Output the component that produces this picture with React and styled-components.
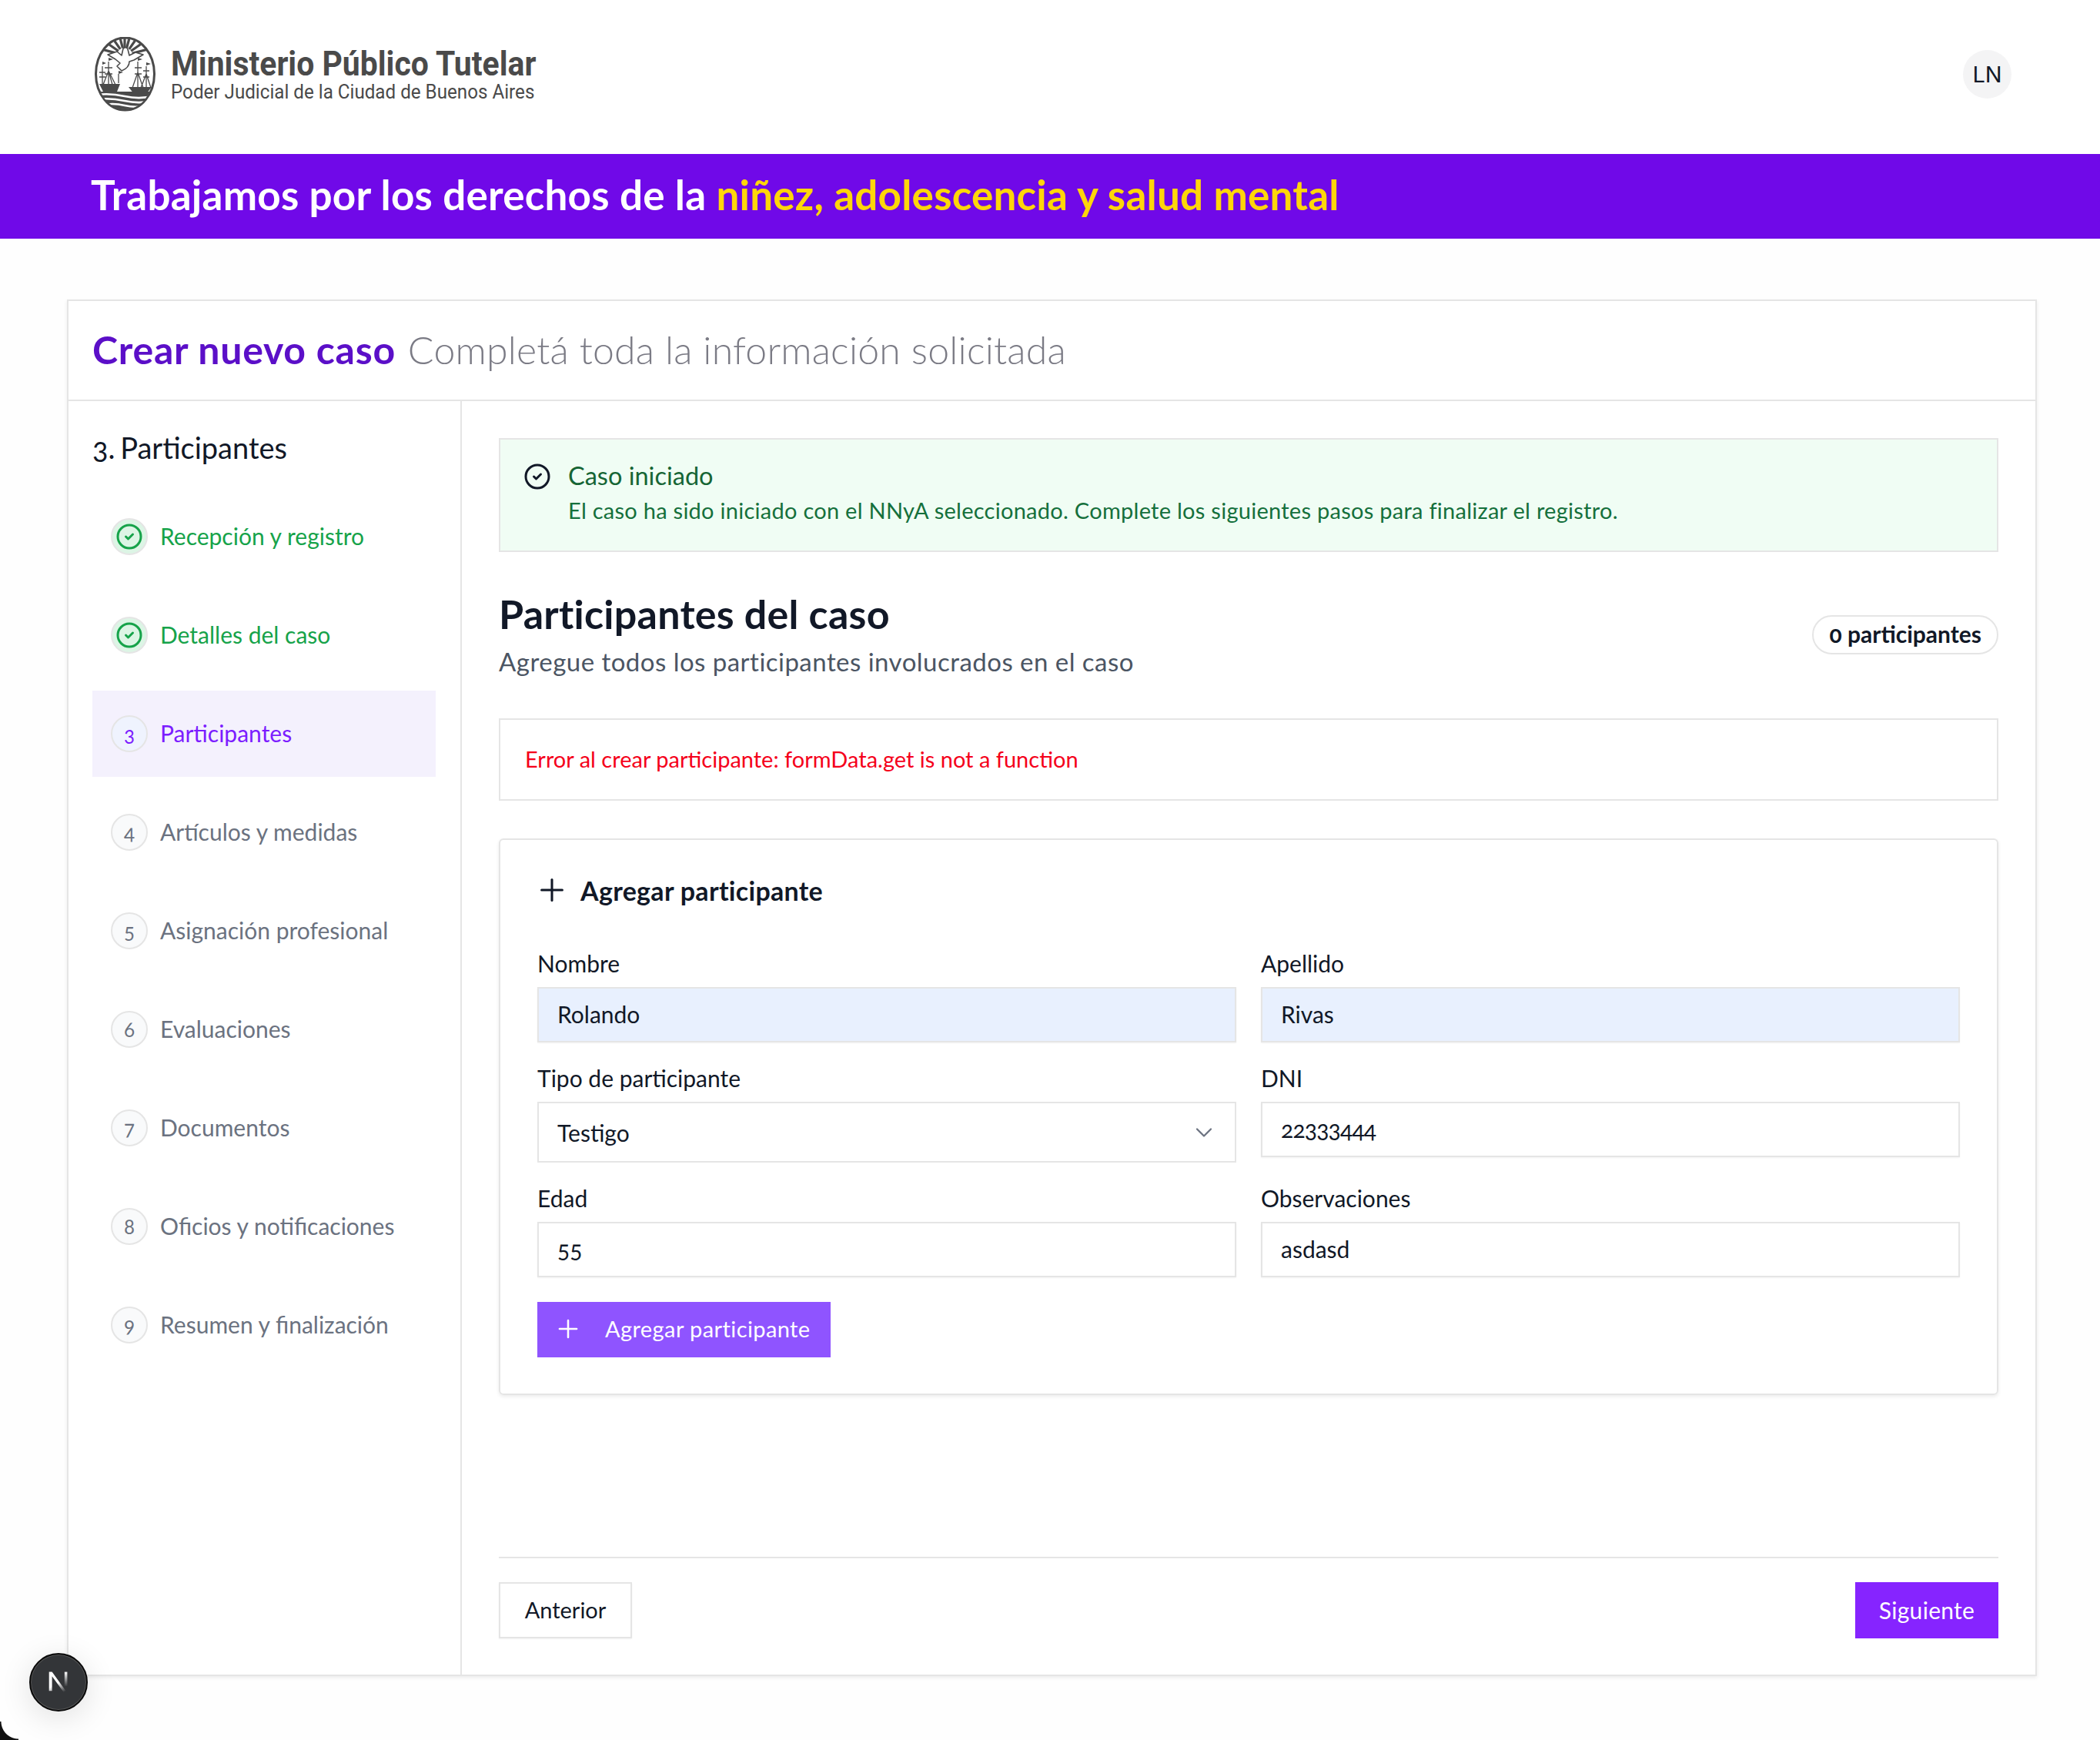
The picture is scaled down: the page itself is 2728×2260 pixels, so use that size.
import React from 'react';
import styled, { createGlobalStyle } from 'styled-components';
import { CircleCheck, ChevronDown, Plus } from 'lucide-react';

const GlobalStyle = createGlobalStyle`
    html, body {
        margin: 0;
        padding: 0;
        background: #fefefe;
    }
    * {
        box-sizing: border-box;
    }
    body {
        font-family: Lato, "Open Sans", sans-serif;
        color: #111827;
        font-variant-numeric: oldstyle-nums;
    }
`;

const steps = [
    { label: 'Recepción y registro', status: 'done' },
    { label: 'Detalles del caso', status: 'done' },
    { label: 'Participantes', status: 'active' },
    { label: 'Artículos y medidas', status: 'pending' },
    { label: 'Asignación profesional', status: 'pending' },
    { label: 'Evaluaciones', status: 'pending' },
    { label: 'Documentos', status: 'pending' },
    { label: 'Oficios y notificaciones', status: 'pending' },
    { label: 'Resumen y finalización', status: 'pending' },
];

const stepColor = { done: '#16a34a', active: '#7c1dff', pending: '#6b7280' };
const circleBg = { done: '#dcf5e5', active: '#eff3fe', pending: '#f9fafb' };

// escudo de la ciudad, dibujado a mano
function Logo() {
    const rays = [-165, -145, -125, -105, -90, -75, -55, -35, -15];
    return (
        <svg width="80" height="98" viewBox="23 18 80 98">
            <defs>
                <clipPath id="oval">
                    <ellipse cx="62.5" cy="66" rx="37" ry="46" />
                </clipPath>
            </defs>
            <ellipse cx="62.5" cy="66" rx="38" ry="47" fill="#fff" stroke="#4a4a4a" strokeWidth="3" />
            <g stroke="#4a4a4a" strokeWidth="3.2" clipPath="url(#oval)">
                {rays.map((a) => {
                    const r = (a * Math.PI) / 180;
                    return (
                        <line
                            key={a}
                            x1={62 + 10 * Math.cos(r)}
                            y1={42 + 10 * Math.sin(r)}
                            x2={62 + 34 * Math.cos(r)}
                            y2={42 + 34 * Math.sin(r)}
                        />
                    );
                })}
            </g>
            <path
                d="M40 41 L52 37 L58 42 L60 33 Q64 30 66 34 L68 42 L76 38 L86 41 L74 48 L68 50 Q68 58 58 62 L52 56 L56 52 L50 47 Z"
                fill="#fff"
                stroke="#4a4a4a"
                strokeWidth="1.6"
                strokeLinejoin="round"
            />
            <g stroke="#4a4a4a" strokeWidth="1.3" fill="none">
                <path d="M33 56 V80 M41 50 V80 M29 64 H37 M29 70 H37 M36 58 H46 M36 66 H46 M34 80 L41 62 L50 80 M41 62 L46 80 M54 66 V78" />
                <path d="M79 50 V84 M90 56 V84 M75 58 H84 M75 66 H84 M86 62 H94 M86 70 H94 M72 84 L79 64 L86 84 M83 84 L90 66 L96 84" />
            </g>
            <path d="M29 79 H56 L52 89 H34 Z M67 83 H97 L90 92 H74 Z" fill="#4a4a4a" />
            <path d="M33 50 l5 2 l-5 2 Z M41 45 l6 2 l-6 2 Z M79 45 l6 2 l-6 2 Z M90 51 l6 2 l-6 2 Z M54 62 l6 2 l-6 2 Z" fill="#4a4a4a" />
            <g clipPath="url(#oval)">
                <rect x="23" y="89" width="80" height="26" fill="#4a4a4a" />
                <path
                    d="M20 94 Q40 90 62 95 T106 93 M20 100 Q40 96 62 101 T106 99 M30 107 Q46 103 62 107 T96 106"
                    stroke="#fff"
                    strokeWidth="2.6"
                    fill="none"
                />
            </g>
        </svg>
    );
}

export default function App() {
    return (
        <Page>
            <GlobalStyle />
            <Header>
                <Brand>
                    <Logo />
                    <BrandText>
                        <BrandName>Ministerio Público Tutelar</BrandName>
                        <BrandSub>Poder Judicial de la Ciudad de Buenos Aires</BrandSub>
                    </BrandText>
                </Brand>
                <Avatar>LN</Avatar>
            </Header>
            <Banner>
                Trabajamos por los derechos de la <Highlight>niñez, adolescencia y salud mental</Highlight>
            </Banner>

            <Card>
                <CardHead>
                    <CardTitle>Crear nuevo caso</CardTitle>
                    <CardHint>Completá toda la información solicitada</CardHint>
                </CardHead>
                <CardBody>
                    <Sidebar>
                        <SideTitle>3. Participantes</SideTitle>
                        <StepList>
                            {steps.map((step, i) => (
                                <Step key={step.label} $status={step.status}>
                                    <StepCircle $status={step.status}>
                                        {step.status === 'done' ? <CircleCheck size={36} strokeWidth={2} /> : i + 1}
                                    </StepCircle>
                                    <StepLabel>{step.label}</StepLabel>
                                </Step>
                            ))}
                        </StepList>
                    </Sidebar>

                    <Main>
                        <Alert>
                            <AlertIcon>
                                <CircleCheck size={36} strokeWidth={2} />
                            </AlertIcon>
                            <div>
                                <AlertTitle>Caso iniciado</AlertTitle>
                                <AlertText>
                                    El caso ha sido iniciado con el NNyA seleccionado. Complete los siguientes pasos para finalizar el registro.
                                </AlertText>
                            </div>
                        </Alert>

                        <SectionHead>
                            <div>
                                <SectionTitle>Participantes del caso</SectionTitle>
                                <SectionText>Agregue todos los participantes involucrados en el caso</SectionText>
                            </div>
                            <Badge>0 participantes</Badge>
                        </SectionHead>

                        <ErrorBox>Error al crear participante: formData.get is not a function</ErrorBox>

                        <FormCard>
                            <FormTitle>
                                <Plus size={46} strokeWidth={1.6} />
                                <span>Agregar participante</span>
                            </FormTitle>
                            <FormGrid>
                                <Field>
                                    <Label>Nombre</Label>
                                    <Input $autofill readOnly value="Rolando" />
                                </Field>
                                <Field>
                                    <Label>Apellido</Label>
                                    <Input $autofill readOnly value="Rivas" />
                                </Field>
                                <Field>
                                    <Label>Tipo de participante</Label>
                                    <SelectBox>
                                        <span>Testigo</span>
                                        <ChevronDown size={36} strokeWidth={1.5} color="#6b7280" />
                                    </SelectBox>
                                </Field>
                                <Field>
                                    <Label>DNI</Label>
                                    <Input $tight readOnly value="22333444" />
                                </Field>
                                <Field>
                                    <Label>Edad</Label>
                                    <Input readOnly value="55" />
                                </Field>
                                <Field>
                                    <Label>Observaciones</Label>
                                    <Input readOnly value="asdasd" />
                                </Field>
                            </FormGrid>
                            <AddButton>
                                <Plus size={38} strokeWidth={1.6} />
                                <span>Agregar participante</span>
                            </AddButton>
                        </FormCard>

                        <Footer>
                            <BackButton>Anterior</BackButton>
                            <NextButton>Siguiente</NextButton>
                        </Footer>
                    </Main>
                </CardBody>
            </Card>

            <DevBadge>
                <svg width="38" height="38" viewBox="0 0 34 34">
                    <defs>
                        <linearGradient id="nfade" x1="0" y1="0" x2="0.5" y2="1">
                            <stop offset="0.55" stopColor="#fff" />
                            <stop offset="1" stopColor="#fff" stopOpacity="0" />
                        </linearGradient>
                        <linearGradient id="nbar" x1="0" y1="0" x2="0" y2="1">
                            <stop offset="0" stopColor="#fff" />
                            <stop offset="1" stopColor="#fff" stopOpacity="0" />
                        </linearGradient>
                    </defs>
                    <path d="M6 5 H9.5 L29 32 H25.5 L9.5 10 V27 H6 Z" fill="url(#nfade)" />
                    <rect x="24" y="5" width="3.2" height="17" fill="url(#nbar)" />
                </svg>
            </DevBadge>
            <Corner />
        </Page>
    );
}

const Page = styled.div`
    position: relative;
    width: 2728px;
    height: 2260px;
    overflow: hidden;
`;
const Header = styled.header`
    height: 200px;
    padding: 0 115px 7px 123px;
    background: #fff;
    display: flex;
    align-items: center;
    justify-content: space-between;
`;
const Brand = styled.div`
    display: flex;
    align-items: center;
    gap: 19px;
    color: #4a4a4a;
`;
const BrandText = styled.div`
    display: flex;
    flex-direction: column;
    align-items: flex-start;
    margin-bottom: 2px;
`;
const BrandName = styled.span`
    font-family: Roboto, sans-serif;
    font-size: 44px;
    line-height: 46px;
    font-weight: 700;
    transform: scaleX(0.93);
    transform-origin: left center;
`;
const BrandSub = styled.span`
    font-family: Roboto, sans-serif;
    font-size: 26px;
    line-height: 26px;
    transform: scaleX(0.93);
    transform-origin: left center;
`;
const Avatar = styled.div`
    width: 63px;
    height: 63px;
    border-radius: 50%;
    background: #f4f4f5;
    display: flex;
    align-items: center;
    justify-content: center;
    font-family: Inter, sans-serif;
    font-size: 29px;
`;
const Banner = styled.div`
    height: 110px;
    padding: 0 0 5px 118px;
    background: #7009e8;
    color: #fff;
    display: flex;
    align-items: center;
    white-space: pre-wrap;
    font-size: 53px;
    font-weight: 700;
    letter-spacing: 0.22px;
`;
const Highlight = styled.span`
    color: #ffd60a;
`;
const Card = styled.section`
    width: 2559px;
    height: 1788px;
    margin: 79px 0 0 87px;
    background: #fff;
    border: 2px solid #e5e5e5;
    box-shadow: 0 2px 5px rgba(0, 0, 0, 0.08);
    display: flex;
    flex-direction: column;
`;
const CardHead = styled.div`
    height: 130px;
    padding: 0 0 2px 31px;
    border-bottom: 2px solid #e5e5e5;
    display: flex;
    align-items: center;
    gap: 16px;
    font-size: 50px;
`;
const CardTitle = styled.span`
    color: #5b0fc8;
    font-weight: 700;
    letter-spacing: 0.75px;
`;
const CardHint = styled.span`
    color: #7b7b85;
    font-weight: 300;
    letter-spacing: 0.2px;
`;
const CardBody = styled.div`
    flex: 1;
    display: flex;
    min-height: 0;
`;
const Sidebar = styled.aside`
    width: 511px;
    flex: none;
    padding: 37px 0 0 31px;
    border-right: 2px solid #e5e5e5;
`;
const SideTitle = styled.div`
    font-size: 38px;
    line-height: 46px;
    margin-bottom: 37px;
    word-spacing: -3px;
`;
const StepList = styled.div`
    display: flex;
    flex-direction: column;
    gap: 16px;
`;
const Step = styled.div`
    width: 446px;
    height: 112px;
    padding-left: 24px;
    display: flex;
    align-items: center;
    gap: 16px;
    color: ${(p) => stepColor[p.$status]};
    background: ${(p) => (p.$status === 'active' ? '#f4f1fd' : 'transparent')};
`;
const StepCircle = styled.div`
    width: 48px;
    height: 48px;
    flex: none;
    border-radius: 50%;
    border: 2px solid #e5e5e5;
    background: ${(p) => circleBg[p.$status]};
    display: flex;
    align-items: center;
    justify-content: center;
    font-size: 26px;
`;
const StepLabel = styled.span`
    font-size: 30px;
    padding-bottom: 3px;
`;
const Main = styled.main`
    flex: 1;
    min-width: 0;
    padding: 48px 48px 47px;
    display: flex;
    flex-direction: column;
`;
const Alert = styled.div`
    height: 148px;
    padding: 26px 30px 0;
    background: #f0fdf4;
    border: 2px solid #e5e5e5;
    display: flex;
    gap: 22px;
`;
const AlertIcon = styled.div`
    flex: none;
    height: 44px;
    display: flex;
    align-items: center;
`;
const AlertTitle = styled.div`
    font-size: 32.5px;
    line-height: 42px;
    color: #166534;
`;
const AlertText = styled.div`
    margin-top: 3px;
    font-size: 29px;
    line-height: 42px;
    color: #15703c;
    letter-spacing: 0.27px;
`;
const SectionHead = styled.div`
    margin-top: 49px;
    display: flex;
    align-items: center;
    justify-content: space-between;
`;
const SectionTitle = styled.h2`
    margin: 0;
    font-size: 52px;
    line-height: 62px;
    font-weight: 700;
    letter-spacing: 0.25px;
`;
const SectionText = styled.p`
    margin: 8px 0 0;
    font-size: 33px;
    line-height: 46px;
    color: #4b5563;
    letter-spacing: 0.47px;
`;
const Badge = styled.div`
    height: 51px;
    padding: 0 20px 2px;
    border: 2px solid #e5e5e5;
    border-radius: 26px;
    display: flex;
    align-items: center;
    font-size: 30px;
    font-weight: 700;
`;
const ErrorBox = styled.div`
    height: 107px;
    margin-top: 51px;
    padding: 0 0 2px 32px;
    border: 2px solid #e5e5e5;
    display: flex;
    align-items: center;
    font-size: 29px;
    color: #f5001a;
`;
const FormCard = styled.div`
    height: 723px;
    margin-top: 49px;
    padding: 42px 48px 0 48px;
    border: 2px solid #e5e5e5;
    border-radius: 6px;
    box-shadow: 0 2px 5px rgba(0, 0, 0, 0.08);
`;
const FormTitle = styled.div`
    height: 46px;
    margin-left: -4px;
    display: flex;
    align-items: center;
    gap: 14px;
    font-size: 34px;
    font-weight: 700;
    letter-spacing: 0.3px;
`;
const FormGrid = styled.div`
    margin-top: 54px;
    display: grid;
    grid-template-columns: 1fr 1fr;
    column-gap: 32px;
    row-gap: 28px;
`;
const Field = styled.div`
    display: flex;
    flex-direction: column;
`;
const Label = styled.label`
    font-size: 30px;
    line-height: 36px;
    margin-bottom: 13px;
`;
const Input = styled.input`
    width: 100%;
    height: 72px;
    padding: 0 24px 3px;
    border: 2px solid #e5e5e5;
    border-radius: 0;
    outline: none;
    background: ${(p) => (p.$autofill ? '#e8f0fe' : '#fff')};
    box-shadow: 0 1px 2px rgba(0, 0, 0, 0.05);
    color: #111827;
    font-family: inherit;
    font-variant-numeric: inherit;
    font-size: 30px;
    letter-spacing: ${(p) => (p.$tight ? '-0.8px' : '0')};
`;
const SelectBox = styled.div`
    height: 79px;
    padding: 0 22px 0 24px;
    border: 2px solid #e5e5e5;
    display: flex;
    align-items: center;
    justify-content: space-between;
    font-size: 30px;
`;
const AddButton = styled.button`
    width: 381px;
    height: 72px;
    margin-top: 32px;
    padding: 0 0 3px 21px;
    border: 0;
    background: #8f54ff;
    color: #fff;
    display: flex;
    align-items: center;
    gap: 29px;
    font-family: inherit;
    font-size: 29px;
    letter-spacing: 0.4px;
`;
const Footer = styled.div`
    margin-top: auto;
    padding-top: 31px;
    border-top: 2px solid #e5e5e5;
    display: flex;
    justify-content: space-between;
`;
const BackButton = styled.button`
    width: 173px;
    height: 73px;
    padding-bottom: 3px;
    border: 2px solid #e5e5e5;
    background: #fff;
    box-shadow: 0 1px 2px rgba(0, 0, 0, 0.05);
    color: #111827;
    font-family: inherit;
    font-size: 29px;
`;
const NextButton = styled.button`
    width: 186px;
    height: 73px;
    padding-bottom: 3px;
    border: 0;
    background: #8624ff;
    color: #fff;
    font-family: inherit;
    font-size: 30px;
    letter-spacing: 0.3px;
`;
const DevBadge = styled.div`
    position: absolute;
    left: 38px;
    top: 2147px;
    width: 76px;
    height: 76px;
    border-radius: 50%;
    background: #333538;
    border: 2px solid #0b0b0b;
    box-shadow: 0 0 0 1px #555 inset, 0 8px 40px rgba(0, 0, 0, 0.12);
    display: flex;
    align-items: center;
    justify-content: center;
`;
const Corner = styled.div`
    position: absolute;
    left: 0;
    bottom: 0;
    width: 24px;
    height: 24px;
    background: radial-gradient(circle at 100% 0, transparent 22px, #111 23px);
`;
